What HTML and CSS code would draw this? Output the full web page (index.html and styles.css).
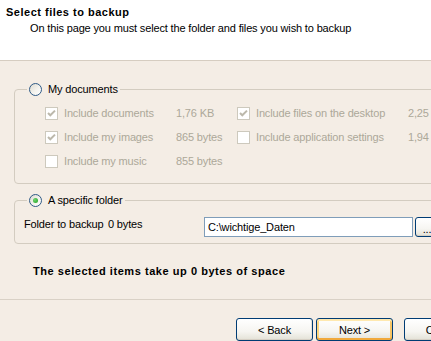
FILE: index.html
```html
<!DOCTYPE html>
<html>
<head>
<meta charset="utf-8">
<title>Select files to backup</title>
<link rel="stylesheet" href="styles.css">
</head>
<body>
<div class="dialog">
  <header class="head">
    <div class="title">Select files to backup</div>
    <div class="subtitle">On this page you must select the folder and files you wish to backup</div>
  </header>
  <main class="body">
    <fieldset class="group g1">
      <legend class="legend"><span class="radio"></span><span>My documents</span></legend>
      <div class="grid">
        <div class="item"><span class="chk"><svg width="11" height="11" viewBox="0 0 11 11"><path d="M2 5 L4.3 7.3 L9 2.6" fill="none" stroke="#bcb8ab" stroke-width="2"/></svg></span>Include documents</div>
        <div class="size">1,76 KB</div>
        <div class="item"><span class="chk"><svg width="11" height="11" viewBox="0 0 11 11"><path d="M2 5 L4.3 7.3 L9 2.6" fill="none" stroke="#bcb8ab" stroke-width="2"/></svg></span>Include files on the desktop</div>
        <div class="size">2,25 KB</div>
        <div class="item"><span class="chk"><svg width="11" height="11" viewBox="0 0 11 11"><path d="M2 5 L4.3 7.3 L9 2.6" fill="none" stroke="#bcb8ab" stroke-width="2"/></svg></span>Include my images</div>
        <div class="size">865 bytes</div>
        <div class="item"><span class="chk"></span>Include application settings</div>
        <div class="size">1,94 KB</div>
        <div class="item"><span class="chk"></span>Include my music</div>
        <div class="size">855 bytes</div>
      </div>
    </fieldset>
    <fieldset class="group g2">
      <legend class="legend"><span class="radio on"></span><span>A specific folder</span></legend>
      <div class="folder-row">
        <span class="flabel">Folder to backup</span>
        <span class="fsize">0 bytes</span>
        <input class="path" type="text" value="C:\wichtige_Daten">
        <button class="btn browse" type="button">...</button>
      </div>
    </fieldset>
    <p class="summary">The selected items take up 0 bytes of space</p>
  </main>
  <footer class="foot">
    <button class="btn nav" type="button">&lt; Back</button>
    <button class="btn nav default" type="button">Next &gt;</button>
    <button class="btn nav cancel" type="button">Cancel</button>
  </footer>
</div>
</body>
</html>
```
FILE: styles.css
```css
html, body {
  margin: 0;
  padding: 0;
}
body {
  width: 431px;
  height: 341px;
  overflow: hidden;
  background: #f4ede5;
  font-family: "Liberation Sans", Arial, sans-serif;
  font-size: 11px;
  letter-spacing: -0.15px;
  color: #000;
}
.dialog {
  width: 480px;
  display: flex;
  flex-direction: column;
}
.head {
  height: 61px;
  box-sizing: border-box;
  background: #fff;
  padding: 6px 0 0 6px;
  border-bottom: 1px solid #d6cdc1;
}
.title {
  font-weight: bold;
  line-height: 13px;
  letter-spacing: 0.5px;
}
.subtitle {
  line-height: 13px;
  margin-top: 3px;
  padding-left: 24px;
}
.body {
  height: 239px;
  box-sizing: border-box;
  padding: 22px 0 0 14px;
  border-bottom: 1px solid #d9d1c6;
  background: #f4ede5;
}
.group {
  margin: 0;
  padding: 0;
  border: 1px solid #d3ccc0;
  border-radius: 4px;
  min-width: 0;
}
.legend {
  margin-left: 12px;
  padding: 0 2px;
  height: 13px;
  line-height: 13px;
  display: flex;
  align-items: center;
  gap: 6px;
}
.radio {
  width: 13px;
  height: 13px;
  box-sizing: border-box;
  border-radius: 50%;
  border: 1px solid #2f5a86;
  background: linear-gradient(135deg, #dedbd0 0%, #f4f3ee 55%, #ffffff 100%);
  display: inline-flex;
  align-items: center;
  justify-content: center;
}
.radio.on::after {
  content: "";
  width: 5px;
  height: 5px;
  border-radius: 50%;
  background: radial-gradient(circle at 35% 35%, #6fd46f, #21a121);
}
.grid {
  display: grid;
  grid-template-columns: 131px 61px 171px auto;
  grid-auto-rows: 24px;
  padding: 5px 0 10px 30px;
  color: #aca899;
}
.item, .size {
  display: flex;
  align-items: center;
  white-space: nowrap;
}
.chk {
  width: 13px;
  height: 13px;
  box-sizing: border-box;
  border: 1px solid #cdc9bd;
  background: #fff;
  margin-right: 6px;
  display: inline-flex;
  align-items: center;
  justify-content: center;
  flex: none;
}
.chk svg {
  display: block;
}
.g2 {
  margin-top: 10px;
}
.folder-row {
  display: flex;
  align-items: flex-start;
  padding: 10px 0 6px 9px;
}
.flabel {
  width: 84px;
  line-height: 13px;
  margin-top: 1px;
  white-space: nowrap;
}
.fsize {
  width: 96px;
  line-height: 13px;
  margin-top: 1px;
}
.path {
  width: 209px;
  height: 20px;
  box-sizing: border-box;
  margin: 0;
  border: 1px solid #7f9db9;
  padding: 0 3px;
  font-family: "Liberation Sans", Arial, sans-serif;
  font-size: 11px;
  letter-spacing: -0.15px;
  color: #000;
  background: #fff;
  outline: none;
}
.btn {
  font-family: "Liberation Sans", Arial, sans-serif;
  font-size: 11px;
  letter-spacing: -0.15px;
  color: #000;
  border: 1px solid #003c74;
  border-radius: 3px;
  background: linear-gradient(#ffffff 0%, #f6f5f1 60%, #e3e1d6 100%);
  box-shadow: inset 0 -1px #d6d0c5, inset -1px 0 #e5e2d8;
  padding: 0;
  margin: 0;
  box-sizing: border-box;
}
.browse {
  width: 24px;
  height: 20px;
  margin-left: 2px;
  line-height: 14px;
  padding-top: 3px;
}
.summary {
  margin: 21px 0 0 19px;
  font-weight: bold;
  line-height: 13px;
  letter-spacing: 0.55px;
}
.foot {
  display: flex;
  padding: 18px 0 0 236px;
  height: 40px;
  box-sizing: border-box;
}
.nav {
  width: 77px;
  height: 23px;
  flex: none;
}
.nav + .nav {
  margin-left: 3px;
}
.nav.cancel {
  margin-left: 11px;
}
.nav.default {
  box-shadow: inset 0 2px #ffe9b0, inset 0 -2px #f1a93c, inset 2px 0 #fbd680, inset -2px 0 #f7c464;
}
```
